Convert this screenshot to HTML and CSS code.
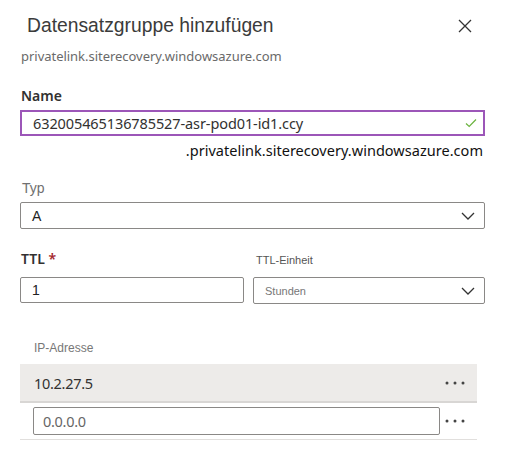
FILE: index.html
```html
<!DOCTYPE html>
<html lang="de">
<head>
<meta charset="utf-8">
<link rel="stylesheet" href="styles.css">
</head>
<body>
<div class="panel">
  <div class="header">
    <h1 class="title">Datensatzgruppe hinzufügen</h1>
    <span class="close">
      <svg width="14" height="14" viewBox="0 0 14 14"><path d="M1 1 L13 13 M13 1 L1 13" stroke="#333" stroke-width="1.3" fill="none"/></svg>
    </span>
  </div>
  <div class="subtitle">privatelink.siterecovery.windowsazure.com</div>

  <div class="label-bold name-label">Name</div>
  <div class="input name-input">
    <span>632005465136785527-asr-pod01-id1.ccy</span>
    <svg class="check" width="12" height="10" viewBox="0 0 12 10"><path d="M1 5.5 L4.2 8.5 L11 1.5" stroke="#6bb33f" stroke-width="1.2" fill="none"/></svg>
  </div>
  <div class="suffix">.privatelink.siterecovery.windowsazure.com</div>

  <div class="label-light typ-label">Typ</div>
  <div class="select">
    <span class="sel-val">A</span>
    <svg class="chev" width="14" height="8" viewBox="0 0 14 8"><path d="M1 1 L7 7 L13 1" stroke="#333" stroke-width="1.3" fill="none"/></svg>
  </div>

  <div class="ttl-row">
    <div class="ttl-col">
      <div class="label-bold ttl-label">TTL <span class="req">*</span></div>
      <div class="select ttl-input"><span class="sel-val">1</span></div>
    </div>
    <div class="unit-col">
      <div class="unit-label">TTL-Einheit</div>
      <div class="select unit-select">
        <span class="unit-val">Stunden</span>
        <svg class="chev" width="14" height="8" viewBox="0 0 14 8"><path d="M1 1 L7 7 L13 1" stroke="#333" stroke-width="1.3" fill="none"/></svg>
      </div>
    </div>
  </div>

  <div class="ip-label">IP-Adresse</div>
  <div class="ip-table">
    <div class="ip-row filled">
      <span class="ip-val">10.2.27.5</span>
      <svg class="dots" width="20" height="4" viewBox="0 0 20 4"><circle cx="2" cy="2" r="1.5" fill="#444"/><circle cx="10" cy="2" r="1.5" fill="#444"/><circle cx="18" cy="2" r="1.5" fill="#444"/></svg>
    </div>
    <div class="ip-row edit">
      <div class="ip-input">0.0.0.0</div>
      <svg class="dots" width="20" height="4" viewBox="0 0 20 4"><circle cx="2" cy="2" r="1.5" fill="#444"/><circle cx="10" cy="2" r="1.5" fill="#444"/><circle cx="18" cy="2" r="1.5" fill="#444"/></svg>
    </div>
  </div>
</div>
</body>
</html>
```
FILE: styles.css
```css
html, body {
  margin: 0;
  padding: 0;
  background: #ffffff;
}
.panel {
  width: 465px;
  padding: 0 20px;
  display: flex;
  flex-direction: column;
}
.header {
  display: flex;
  justify-content: space-between;
  align-items: center;
  height: 50px;
  padding-top: 1px;
}
.title {
  margin: 0 0 0 7px;
  font-family: "Liberation Sans", Arial, sans-serif;
  font-weight: normal;
  font-size: 19.3px;
  color: #3b3b3b;
}
.close {
  display: flex;
  margin-right: 13px;
}
.subtitle {
  margin-top: -4px;
  margin-left: 1px;
  font-family: "Noto Sans", sans-serif;
  font-size: 13px;
  line-height: 18px;
  color: #6a6a6a;
  letter-spacing: -0.03px;
}
.label-bold {
  font-family: "Noto Sans", sans-serif;
  font-weight: 600;
  font-size: 14px;
  line-height: 18px;
  color: #323130;
}
.name-label {
  margin-top: 22px;
  margin-left: 1px;
}
.input {
  box-sizing: border-box;
  height: 26px;
  display: flex;
  align-items: center;
  justify-content: space-between;
  padding: 0 6px 0 11px;
  margin-top: 5px;
}
.name-input {
  border: 2px solid #9c56b8;
  font-family: "Noto Sans", sans-serif;
  font-size: 14.5px;
  color: #323130;
  letter-spacing: -0.1px;
}
.suffix {
  text-align: right;
  padding-right: 2px;
  font-family: "Noto Sans", sans-serif;
  font-size: 14.5px;
  line-height: 20px;
  margin-top: 4px;
  color: #111;
  letter-spacing: 0.03px;
}
.label-light {
  font-family: "Liberation Sans", Arial, sans-serif;
  font-size: 14px;
  color: #707070;
  line-height: 18px;
}
.typ-label {
  margin-top: 19px;
  margin-left: 2px;
}
.select {
  box-sizing: border-box;
  height: 27px;
  border: 1px solid #8a8886;
  border-radius: 2px;
  display: flex;
  align-items: center;
  justify-content: space-between;
  padding: 0 9px 0 11px;
  margin-top: 5px;
}
.sel-val {
  font-family: "Liberation Sans", Arial, sans-serif;
  font-size: 14px;
  color: #222;
}
.chev {
  flex: none;
}
.ttl-row {
  display: flex;
  gap: 9px;
  margin-top: 21px;
}
.ttl-col {
  width: 224px;
  display: flex;
  flex-direction: column;
}
.unit-col {
  flex: 1;
  display: flex;
  flex-direction: column;
}
.ttl-label {
  margin-left: 1px;
  height: 20px;
  font-size: 14px;
}
.req {
  color: #a4262c;
}
.ttl-input {
  margin-top: 7px;
  height: 26px;
}
.unit-label {
  margin-left: 3px;
  height: 20px;
  font-family: "Liberation Sans", Arial, sans-serif;
  font-size: 11px;
  color: #555;
  line-height: 20px;
}
.unit-select {
  margin-top: 7px;
  height: 27px;
}
.unit-val {
  font-family: "Liberation Sans", Arial, sans-serif;
  font-size: 11px;
  color: #777;
}
.ip-label {
  margin-top: 36px;
  margin-left: 14px;
  font-family: "Liberation Sans", Arial, sans-serif;
  font-size: 12px;
  color: #777;
  line-height: 16px;
}
.ip-table {
  width: 457px;
  margin-top: 8px;
  display: flex;
  flex-direction: column;
}
.ip-row {
  display: flex;
  align-items: center;
  justify-content: space-between;
  box-sizing: border-box;
}
.ip-row.filled {
  height: 39px;
  background: #edebe9;
  border-bottom: 2px solid #d8d6d4;
  padding: 0 12px 0 14px;
}
.ip-val {
  font-family: "Noto Sans", sans-serif;
  font-size: 14.5px;
  color: #323130;
  letter-spacing: -0.3px;
}
.dots {
  flex: none;
}
.ip-row.edit {
  height: 37px;
  border-bottom: 1px solid #e1dfdd;
  padding: 0 12px 0 13px;
}
.ip-input {
  box-sizing: border-box;
  width: 407px;
  height: 28px;
  border: 1px solid #8a8886;
  border-radius: 2px;
  display: flex;
  align-items: center;
  padding-left: 9px;
  font-family: "Noto Sans", sans-serif;
  font-size: 14.5px;
  color: #666;
  letter-spacing: -0.3px;
}
```
